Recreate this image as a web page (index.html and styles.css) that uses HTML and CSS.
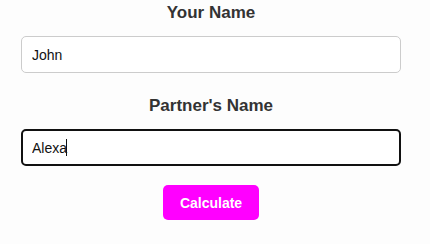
FILE: index.html
```html
<!DOCTYPE html>
<html lang="en">
<head>
  <meta charset="UTF-8" />
  <meta name="viewport" content="width=device-width, initial-scale=1.0">
  <title>Love Calculator</title>
  <link rel="stylesheet" href="styles.css">
</head>
<body>

  <!-- Names Form -->
  <div class="container">
    <h2>Your Name</h2>
    <input type="text" id="name1" value="John">

    <h2 class="second">Partner's Name</h2>
    <div class="field">
      <input type="text" id="name2" class="active" value="Alexa">
      <span class="caret"></span>
    </div>

    <button class="pink">Calculate</button>
  </div>

</body>
</html>
```

FILE: styles.css
```css
body {
  font-family: "Liberation Sans", Arial, sans-serif;
  margin: 0;
  padding: 0;
  background: #fdfdfd;
}

.container {
  width: 380px;
  margin-left: 21px;
  text-align: center;
}

h2 {
  font-size: 17px;
  line-height: 26px;
  margin: 0 0 10px 0;
  color: #333;
  font-weight: bold;
}

h2.second {
  margin-top: 20px;
}

input[type="text"] {
  display: block;
  box-sizing: border-box;
  width: 100%;
  height: 37px;
  padding: 0 10px;
  font-family: "Liberation Sans", Arial, sans-serif;
  font-size: 14px;
  color: #111;
  background: #fff;
  border: 1px solid #ccc;
  border-radius: 5px;
  outline: none;
}

input.active {
  border: 2px solid #111;
  padding: 0 9px;
}

.field {
  position: relative;
}

/* fake text cursor after the typed name */
.caret {
  position: absolute;
  left: 45px;
  top: 10px;
  width: 1px;
  height: 17px;
  background: #111;
}

button {
  margin-top: 19px;
  width: 96px;
  height: 35px;
  font-family: "Liberation Sans", Arial, sans-serif;
  font-size: 14px;
  font-weight: bold;
  color: white;
  border: none;
  border-radius: 5px;
  cursor: pointer;
}

.pink { background: #f0f; }
```
